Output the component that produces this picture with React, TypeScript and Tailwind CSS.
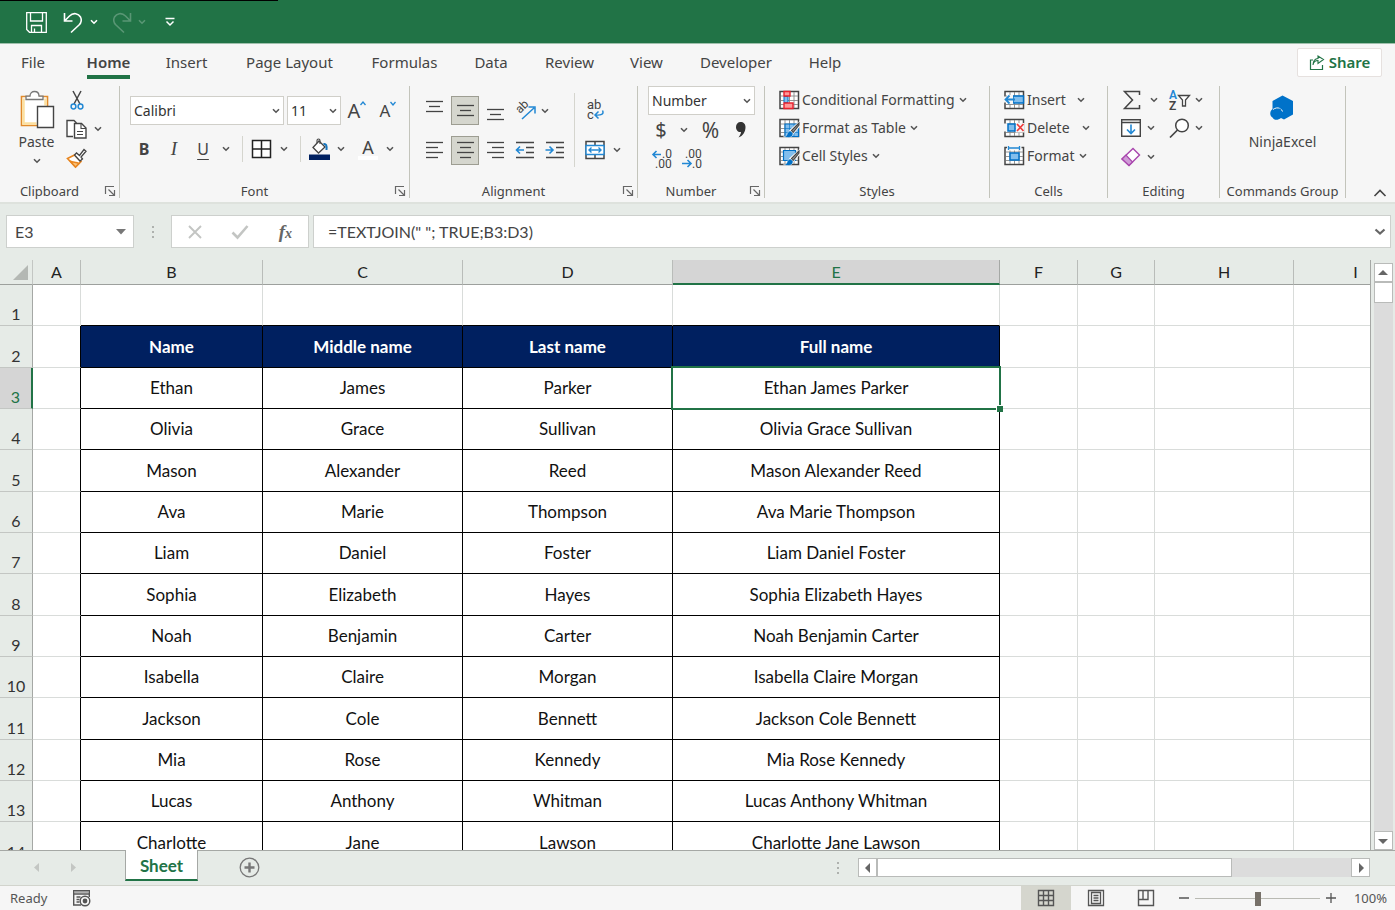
import { useState } from 'react';
import type { ReactNode } from 'react';
import clsx from 'clsx';

const people = [
  ['Ethan', 'James', 'Parker'],
  ['Olivia', 'Grace', 'Sullivan'],
  ['Mason', 'Alexander', 'Reed'],
  ['Ava', 'Marie', 'Thompson'],
  ['Liam', 'Daniel', 'Foster'],
  ['Sophia', 'Elizabeth', 'Hayes'],
  ['Noah', 'Benjamin', 'Carter'],
  ['Isabella', 'Claire', 'Morgan'],
  ['Jackson', 'Cole', 'Bennett'],
  ['Mia', 'Rose', 'Kennedy'],
  ['Lucas', 'Anthony', 'Whitman'],
  ['Charlotte', 'Jane', 'Lawson'],
];

const rows: string[][] = [
  ['', '', '', ''],
  ['Name', 'Middle name', 'Last name', 'Full name'],
  ...people.map((p) => [...p, p.join(' ')]),
];

const columns = [
  { name: 'A', width: 'w-[48px]' },
  { name: 'B', width: 'w-[182px]' },
  { name: 'C', width: 'w-[200px]' },
  { name: 'D', width: 'w-[210px]' },
  { name: 'E', width: 'w-[327px]' },
  { name: 'F', width: 'w-[78px]' },
  { name: 'G', width: 'w-[77px]' },
  { name: 'H', width: 'w-[139px]' },
  { name: 'I', width: 'w-[124px]' },
];

const tabs = [
  { name: 'File', width: 'w-[66px]' },
  { name: 'Home', width: 'w-[85px]' },
  { name: 'Insert', width: 'w-[71px]' },
  { name: 'Page Layout', width: 'w-[135px]' },
  { name: 'Formulas', width: 'w-[95px]' },
  { name: 'Data', width: 'w-[78px]' },
  { name: 'Review', width: 'w-[79px]' },
  { name: 'View', width: 'w-[75px]' },
  { name: 'Developer', width: 'w-[104px]' },
  { name: 'Help', width: 'w-[74px]' },
];

function Icon({ w = 20, h = 20, children }: { w?: number; h?: number; children: ReactNode }) {
  return (
    <svg width={w} height={h} viewBox={`0 0 ${w} ${h}`} fill="none" stroke="#444" strokeWidth="1.4" className="shrink-0 overflow-visible font-[Roboto,sans-serif]" aria-hidden="true">
      {children}
    </svg>
  );
}

function Chevron() {
  return (
    <svg width="8" height="6" viewBox="0 0 8 6" fill="none" stroke="#555" strokeWidth="1.6" className="shrink-0" aria-hidden="true">
      <path d="M1 1.2 4 4.2 7 1.2" />
    </svg>
  );
}

function Tool({ label, className, children }: { label: string; className?: string; children: ReactNode }) {
  return (
    <button type="button" aria-label={label} className={clsx('flex shrink-0 items-center justify-center', className)}>
      {children}
    </button>
  );
}

function Launcher({ label }: { label: string }) {
  return (
    <Tool label={label} className="w-5 pl-[2px]">
      <Icon w={12} h={12}>
        <path d="M1.500 9V1.500H10M4.500 4.500 10 10M10.500 5v5.500H5" stroke="#666" strokeWidth="1.200" />
      </Icon>
    </Tool>
  );
}

function Group({ title, width, launcher, children }: { title: string; width: string; launcher?: boolean; children: ReactNode }) {
  return (
    <section aria-label={title} className={clsx('flex h-28 shrink-0 flex-col border-r border-[#c3c4bb]', width)}>
      <div className="flex-1">{children}</div>
      <div className="flex h-[14px] items-center">
        <span className="flex-1 text-center text-[13px] leading-[14px] whitespace-nowrap">{title}</span>
        {launcher && <Launcher label={`${title} settings`} />}
      </div>
    </section>
  );
}

function Combo({ label, options, className }: { label: string; options: string[]; className: string }) {
  return (
    <div className={clsx('relative h-[29px]', className)}>
      <select aria-label={label} className="h-full w-full appearance-none border border-[#d0cfc9] bg-white pl-[3px] text-sm text-[#333]">
        {options.map((o) => (
          <option key={o}>{o}</option>
        ))}
      </select>
      <span className="pointer-events-none absolute top-3 right-1">
        <Chevron />
      </span>
    </div>
  );
}

function AlignLines({ lines }: { lines: number[][] }) {
  return (
    <Icon w={19} h={20}>
      {lines.map(([x1, x2, y]) => (
        <path key={y} d={`M${x1} ${y}.5H${x2}`} strokeWidth="1.3" />
      ))}
    </Icon>
  );
}

function CellGrid() {
  return (
    <>
      <path d="M1 1.500h18.500v17H1z" fill="#fff" strokeWidth="1.500" />
      <path d="M6 2v16M10.500 2v16M15 2v16M2 6h17M2 10.500h17M2 14.500h17" stroke="#888" strokeWidth=".9" />
    </>
  );
}

function Brush() {
  return (
    <>
      <path d="M20.500 4 11 12.500l2.500 3.500 7-8z" fill="#f6f6f6" stroke="#f6f6f6" strokeWidth="1.500" />
      <path d="M20 5 12.500 12.500l1.500 2 6-7.500z" fill="#999" stroke="#444" strokeWidth="1.100" />
      <path d="M12 13c-3 0-3.500 2-4 3.500-.5 1.500-2 2-3.500 2 4 1.800 9.500 1.500 9.500-3z" fill="#0070c6" stroke="#f6f6f6" strokeWidth=".5" />
    </>
  );
}

function Clipboard() {
  return (
    <Group title="Clipboard" width="w-[120px]" launcher>
      <div className="flex pt-1">
        <button type="button" className="flex w-[66px] flex-col items-center pl-[7px]">
          <Icon w={36} h={40}>
            <path d="M2.500 6.500h26v29h-26z" fill="#fff" stroke="#e18a2b" strokeWidth="1.600" />
            <path d="M4.500 8.500v25h13M26.500 8.500v7" stroke="#fce0a0" strokeWidth="2.500" />
            <path d="M7 9.500V6.200h4C11 3 13 1.500 15.500 1.500S20 3 20 6.200h4v3.300z" fill="#fff" stroke="#777" strokeWidth="1.300" />
            <path d="M18.500 16.500h16v21h-16z" fill="#fff" strokeWidth="1.400" />
          </Icon>
          <span className="pt-[2px] text-sm leading-5">Paste</span>
          <span className="pt-[6px]">
            <Chevron />
          </span>
        </button>
        <div className="flex flex-col gap-[9px]">
          <Tool label="Cut" className="w-[21px]">
            <Icon>
              <path d="M6 1 13 14M14 1 7 14" strokeWidth="1.500" />
              <circle cx="6.500" cy="16.500" r="2.400" stroke="#2288d4" strokeWidth="1.500" />
              <circle cx="13.500" cy="16.500" r="2.400" stroke="#2288d4" strokeWidth="1.500" />
            </Icon>
          </Tool>
          <div className="flex items-center gap-[7px]">
            <Tool label="Copy" className="w-[21px]">
              <Icon w={21}>
                <path d="M7 17.500H1V1.500h7l2.500 2.500" fill="#fff" />
                <path d="M8.500 4.500h7l4.500 4.500v10H8.500z" fill="#fff" />
                <path d="M15 4.500v5h5M11 12.500h6M11 15.500h6" strokeWidth="1.100" />
              </Icon>
            </Tool>
            <Tool label="Copy options">
              <Chevron />
            </Tool>
          </div>
          <Tool label="Format Painter" className="w-[21px]">
            <Icon w={21}>
              <path d="M1.500 10.500 8.500 7l6.500 6.500-5.500 5.500z" fill="#fff" stroke="#e8851f" strokeWidth="1.600" />
              <path d="M4 13c3 1.500 6 1 9 2.500l-3.500 3.500z" fill="#f9c27a" stroke="#e8851f" />
              <path d="m8.500 7 2-2 3 2.500 4.500-6 2 1.800-5 5.700 1.500 2-2.500 2z" fill="#fff" strokeWidth="1.300" />
            </Icon>
          </Tool>
        </div>
      </div>
    </Group>
  );
}

function Font() {
  return (
    <Group title="Font" width="w-[290px]" launcher>
      <div className="flex items-center gap-[3px] pt-[10px] pl-[10px]">
        <Combo label="Font name" options={['Calibri', 'Arial']} className="w-[154px]" />
        <Combo label="Font size" options={['11', '12']} className="w-[54px]" />
        <Tool label="Increase font size" className="ml-[2px] w-[22px] text-[20px] leading-6">
          A
          <span className="self-start pt-[2px]">
            <svg width="6" height="5" viewBox="0 0 6 5" fill="none" stroke="#2288d4" strokeWidth="1.300"><path d="m.5 4 2.500-3 2.500 3" /></svg>
          </span>
        </Tool>
        <Tool label="Decrease font size" className="ml-[7px] w-[20px] text-[17px] leading-6">
          A
          <span className="self-start pt-[2px]">
            <svg width="6" height="5" viewBox="0 0 6 5" fill="none" stroke="#2288d4" strokeWidth="1.300"><path d="m.5 1 2.500 3 2.500-3" /></svg>
          </span>
        </Tool>
      </div>
      <div className="mt-[11px] flex h-[26px] items-center pl-[14px]">
        <Tool label="Bold" className="w-5 text-base font-bold">B</Tool>
        <Tool label="Italic" className="ml-[10px] w-5 font-['Liberation_Serif',serif] text-[19px] italic">I</Tool>
        <Tool label="Underline" className="ml-[9px] w-5 text-base underline underline-offset-4">U</Tool>
        <Tool label="Underline options" className="ml-[9px]"><Chevron /></Tool>
        <span className="ml-3 h-[26px] w-px bg-[#d5d5ce]" />
        <Tool label="Borders" className="ml-2">
          <Icon w={21}>
            <path d="M1.500 1.500h18v17h-18zM10.500 1.500v17M1.500 10h18" fill="#fff" stroke="#222" strokeWidth="1.500" />
          </Icon>
        </Tool>
        <Tool label="Border options" className="ml-2"><Chevron /></Tool>
        <span className="ml-3 h-[26px] w-px bg-[#d5d5ce]" />
        <Tool label="Fill colour" className="ml-2">
          <Icon w={21} h={22}>
            <path d="m4 9.500 6-6.500 6 6-6.500 6z" fill="#fff" strokeWidth="1.300" />
            <path d="M8 5V2.500c0-2 3-2 3 0V6" strokeWidth="1.100" />
            <path d="M14.500 6c2.500-.5 3.500 1 3 6" stroke="#1675bd" strokeWidth="2" />
            <path d="M0 16.500h21V22H0z" fill="#002060" stroke="none" />
          </Icon>
        </Tool>
        <Tool label="Fill options" className="ml-[7px]"><Chevron /></Tool>
        <Tool label="Font colour" className="ml-[13px] h-[22px] w-[20px] border-b-4 border-white text-[18px] leading-4">A</Tool>
        <Tool label="Font colour options" className="ml-2"><Chevron /></Tool>
      </div>
    </Group>
  );
}

function Alignment() {
  const on = 'h-[29px] w-[28px] border border-[#9d9d92] bg-[#d5d6ce]';
  return (
    <Group title="Alignment" width="w-[228px]" launcher>
      <div className="flex pl-[10px]">
        <div className="flex flex-col gap-[11px] pt-[10px]">
          <div className="flex h-[29px] items-center">
            <Tool label="Top align" className="w-[29px]">
              <AlignLines lines={[[1, 18, 0], [4, 15, 5], [1, 18, 10]]} />
            </Tool>
            <Tool label="Middle align" className={clsx('ml-[2px]', on)}>
              <AlignLines lines={[[1, 18, 4], [4, 15, 9], [1, 18, 14]]} />
            </Tool>
            <Tool label="Bottom align" className="ml-[2px] w-[29px]">
              <AlignLines lines={[[1, 18, 8], [4, 15, 13], [1, 18, 18]]} />
            </Tool>
            <Tool label="Orientation" className="ml-[5px]">
              <Icon w={22}>
                <text x="0" y="0" transform="translate(5 13) rotate(-45)" fill="#444" stroke="none" fontSize="12">ab</text>
                <path d="m7 18 12-11M13.500 6H20v6.500" stroke="#2288d4" strokeWidth="1.500" />
              </Icon>
            </Tool>
            <Tool label="Orientation options" className="ml-1"><Chevron /></Tool>
          </div>
          <div className="flex h-[29px] items-center">
            <Tool label="Align left" className="w-[29px]">
              <AlignLines lines={[[1, 18, 1], [1, 13, 6], [1, 18, 11], [1, 13, 16]]} />
            </Tool>
            <Tool label="Align centre" className={clsx('ml-[2px]', on)}>
              <AlignLines lines={[[1, 18, 1], [4, 15, 6], [1, 18, 11], [4, 15, 16]]} />
            </Tool>
            <Tool label="Align right" className="ml-[2px] w-[29px]">
              <AlignLines lines={[[1, 18, 1], [6, 18, 6], [1, 18, 11], [6, 18, 16]]} />
            </Tool>
            <Tool label="Decrease indent" className="ml-[5px]">
              <Icon>
                <path d="M1 1.500h18M11 6.500h8M11 11.500h8M1 16.500h18" strokeWidth="1.300" />
                <path d="M9 9H2M5 5.500 1.500 9 5 12.500" stroke="#2288d4" strokeWidth="1.600" />
              </Icon>
            </Tool>
            <Tool label="Increase indent" className="ml-[10px]">
              <Icon>
                <path d="M1 1.500h18M11 6.500h8M11 11.500h8M1 16.500h18" strokeWidth="1.300" />
                <path d="M.5 9h7M4.500 5.500 8 9l-3.500 3.500" stroke="#2288d4" strokeWidth="1.600" />
              </Icon>
            </Tool>
          </div>
        </div>
        <span className="mt-[7px] ml-[9px] h-[74px] w-px bg-[#d5d5ce]" />
        <div className="flex flex-col gap-5 pt-[14px] pl-[10px]">
          <Tool label="Wrap text" className="w-[21px]">
            <Icon w={21}>
              <text x="2" y="9" fill="#444" stroke="none" fontSize="13">ab</text>
              <text x="2" y="19" fill="#444" stroke="none" fontSize="13">c</text>
              <path d="M17.500 10.500c2 4-2 5-7 4.500M13.500 11.500 10 15l3.500 3.500" stroke="#2288d4" strokeWidth="1.500" />
            </Icon>
          </Tool>
          <div className="flex items-center gap-2">
            <Tool label="Merge and centre">
              <Icon>
                <path d="M1 1.500h18v17H1zM10 1.500V5M10 15v3.500" fill="#fff" strokeWidth="1.500" />
                <path d="M1 5.500h18v9H1z" fill="#fff" stroke="#2288d4" strokeWidth="1.400" />
                <path d="M4 10h12M6.500 7.500 4 10l2.500 2.500M13.500 7.500 16 10l-2.500 2.500" stroke="#2288d4" strokeWidth="1.400" />
              </Icon>
            </Tool>
            <Tool label="Merge options"><Chevron /></Tool>
          </div>
        </div>
      </div>
    </Group>
  );
}

function NumberFormat() {
  return (
    <Group title="Number" width="w-[127px]" launcher>
      <div className="pl-[10px]">
        <Combo label="Number format" options={['Number', 'General']} className="w-[107px]" />
        <div className="flex h-[30px] items-center">
          <Tool label="Currency" className="w-[26px] text-[20px] leading-6">$</Tool>
          <Tool label="Currency options" className="ml-[6px]"><Chevron /></Tool>
          <Tool label="Percent" className="ml-3 w-[21px] text-[21px] leading-6">%</Tool>
          <Tool label="Comma style" className="ml-[14px]">
            <Icon w={12} h={18}>
              <path d="M5.500 1c3 0 5 2 5 5 0 5-2.500 9-7 10.500C5 14.500 6 12.500 6 11 3 11.500 1 9 1 6s2-5 4.500-5z" fill="#333" stroke="none" />
            </Icon>
          </Tool>
        </div>
        <div className="flex gap-[8px] pt-[3px] pl-1">
          <Tool label="Increase decimal">
            <Icon w={22} h={21}>
              <text x="10" y="10" fill="#444" stroke="none" fontSize="12">.0</text>
              <text x="3" y="20" fill="#444" stroke="none" fontSize="12">.00</text>
              <path d="M9 6.500H1M4.500 3 1 6.500 4.500 10" stroke="#2288d4" strokeWidth="1.600" />
            </Icon>
          </Tool>
          <Tool label="Decrease decimal">
            <Icon w={22} h={21}>
              <text x="3" y="10" fill="#444" stroke="none" fontSize="12">.00</text>
              <text x="10" y="20" fill="#444" stroke="none" fontSize="12">.0</text>
              <path d="M0 15.500h9M5.500 12 9 15.500 5.500 19" stroke="#2288d4" strokeWidth="1.600" />
            </Icon>
          </Tool>
        </div>
      </div>
    </Group>
  );
}

function MenuButton({ label, labelWidth, children }: { label: string; labelWidth?: string; children: ReactNode }) {
  return (
    <button type="button" className="flex h-[28px] items-center text-sm whitespace-nowrap">
      <Icon>{children}</Icon>
      <span className={clsx('ml-[3px] text-left', labelWidth)}>{label}</span>
      <span className="ml-1">
        <Chevron />
      </span>
    </button>
  );
}

function Styles() {
  return (
    <Group title="Styles" width="w-[225px]">
      <div className="flex flex-col items-start pl-[14px]">
        <MenuButton label="Conditional Formatting">
          <CellGrid />
          <path d="M5 6.500h4v6H5z" fill="#83beec" stroke="#0070c6" strokeWidth="1" />
          <path d="M5 1.500h6V6H5zM5 13h9v5.500H5z" fill="#f99" stroke="#e8222e" strokeWidth="1.400" />
        </MenuButton>
        <MenuButton label="Format as Table">
          <CellGrid />
          <path d="M6 6h13.500v12.500H6z" fill="#83beec" stroke="#0070c6" strokeWidth="1.200" />
          <path d="M10.500 6v12M15 6v12M6 10.500h13M6 14.500h13" stroke="#0070c6" strokeWidth=".6" />
          <Brush />
        </MenuButton>
        <MenuButton label="Cell Styles">
          <CellGrid />
          <path d="M4.500 4.500h12v10h-12z" fill="#83beec" stroke="#0070c6" strokeWidth="1.200" />
          <Brush />
        </MenuButton>
      </div>
    </Group>
  );
}

function Cells() {
  return (
    <Group title="Cells" width="w-[118px]">
      <div className="flex flex-col items-start pl-[14px]">
        <MenuButton label="Insert" labelWidth="w-[46px]">
          <CellGrid />
          <path d="M9 6h10.500v7H9z" fill="#83beec" stroke="#0070c6" strokeWidth="1.400" />
          <path d="M0 6.500h2v6H0zM3 5h6v9H3z" fill="#f6f6f6" stroke="none" />
          <path d="M11 9.500H1.500M5.500 5.500l-4 4 4 4" stroke="#2288d4" strokeWidth="1.800" />
        </MenuButton>
        <MenuButton label="Delete" labelWidth="w-[51px]">
          <CellGrid />
          <path d="M0 5.500h4v8H0zM11.500 5h9v9.500h-9z" fill="#f6f6f6" stroke="none" />
          <path d="M4 6h7v7H4z" fill="#83beec" stroke="#0070c6" strokeWidth="1.500" />
          <path d="m13 6 6.500 7M19.500 6 13 13" stroke="#ee3a3a" strokeWidth="1.700" />
        </MenuButton>
        <MenuButton label="Format">
          <CellGrid />
          <path d="M3 0h14.500v4.500H3z" fill="#f6f6f6" stroke="none" />
          <path d="M4.500 0v4M15.500 0v4M4.500 2h11" stroke="#2288d4" strokeWidth="1.300" />
          <path d="M6 7h9v7H6z" fill="#83beec" stroke="#0070c6" strokeWidth="1.500" />
        </MenuButton>
      </div>
    </Group>
  );
}

function Editing() {
  return (
    <Group title="Editing" width="w-[112px]">
      <div className="grid grid-cols-[48px_1fr] pl-[13px]">
        <div className="flex h-[27px] items-center gap-[7px]">
          <Tool label="AutoSum"><Icon w={22}><path d="M18.500 5V1.500H3.500l8 8.500-8 8.500h15V15" strokeWidth="1.500" /></Icon></Tool>
          <Tool label="AutoSum options"><Chevron /></Tool>
        </div>
        <div className="flex h-[27px] items-center gap-1">
          <Tool label="Sort and filter">
            <Icon w={22} h={22}>
              <text x="0" y="10" fill="#2288d4" stroke="none" fontSize="12" fontWeight="600">A</text>
              <text x="0" y="21" fill="#444" stroke="none" fontSize="12" fontWeight="600">Z</text>
              <path d="M9.500 6.500h11l-4 4.500v6h-3v-6z" fill="#fff" strokeWidth="1.300" />
            </Icon>
          </Tool>
          <Tool label="Sort options"><Chevron /></Tool>
        </div>
        <div className="flex h-[29px] items-center gap-[6px]">
          <Tool label="Fill"><Icon w={20}><path d="M.7 1.700h18.600v16.500H.7zM1 4.500h18" fill="#fff" strokeWidth="1.400" /><path d="M10 6.500V15M6 11.500l4 4 4-4" stroke="#2288d4" strokeWidth="1.600" /></Icon></Tool>
          <Tool label="Fill options"><Chevron /></Tool>
        </div>
        <div className="flex h-[29px] items-center gap-[5px]">
          <Tool label="Find"><Icon w={21}><circle cx="13" cy="7.500" r="6.300" fill="#fff" strokeWidth="1.500" /><path d="M8.500 12 1 19.500" strokeWidth="1.700" /></Icon></Tool>
          <Tool label="Find options"><Chevron /></Tool>
        </div>
        <div className="flex h-[29px] items-center gap-[6px]">
          <Tool label="Clear">
            <Icon w={20}>
              <path d="m1 12 11-10.500 6.500 6.500L8 18.500z" fill="#fff" stroke="#a845ad" strokeWidth="1.400" />
              <path d="m1 12 4-4 6.500 7L8 18.500z" fill="#cf9bd6" stroke="#a845ad" strokeWidth="1.200" />
            </Icon>
          </Tool>
          <Tool label="Clear options"><Chevron /></Tool>
        </div>
      </div>
    </Group>
  );
}

function Ribbon() {
  const [active, setActive] = useState('Home');
  return (
    <div className="border-b-2 border-[#dee2dd] bg-[#f6f6f6] text-[#444]">
      <div className="flex h-[42px] items-start justify-between pr-[13px]">
        <nav className="flex">
          {tabs.map((t) => (
            <button key={t.name} type="button" onClick={() => setActive(t.name)} className={clsx('flex justify-center pt-[5px] whitespace-nowrap', t.width)}>
              <span className={clsx('h-[30px] border-b-4 text-[15px] leading-[26px]', active === t.name ? 'border-[#217346] font-semibold' : 'border-transparent')}>{t.name}</span>
            </button>
          ))}
        </nav>
        <button type="button" className="mt-1 flex h-[29px] w-[85px] items-center justify-center gap-1 rounded-[2px] border border-[#e6e1df] bg-white text-[15px] font-semibold text-[#217346]">
          <Icon w={16} h={16}>
            <path d="M4 5H1.500v9.500h12V10" stroke="#217346" strokeWidth="1.200" />
            <path d="M4 10c.5-3 2-4.500 5-4.500V8.500L14.500 4.500 9 1v2.500C6 3.500 4 6 4 10z" stroke="#217346" strokeWidth="1.100" />
          </Icon>
          Share
        </button>
      </div>
      <div className="flex h-[116px]">
        <Clipboard />
        <Font />
        <Alignment />
        <NumberFormat />
        <Styles />
        <Cells />
        <Editing />
        <Group title="Commands Group" width="w-[126px]">
          <button type="button" className="mx-auto flex flex-col items-center pt-[9px] text-sm leading-5">
            <Icon w={26} h={26}>
              <path d="M13.500.5 24 6v13.500l-9 5-3-1.500c-3 2.500-7 2.500-8.500-.5C.5 21 .5 16 3.500 14V6z" fill="#0072c9" stroke="none" />
              <path d="M4 14.500c4-3 8.500-1.500 9.500 2" stroke="#f6f6f6" strokeWidth="1" strokeDasharray="7 1" />
            </Icon>
            <span className="pt-[11px]">NinjaExcel</span>
          </button>
        </Group>
        <div className="flex flex-1 items-end justify-end pr-2 pb-1">
          <Tool label="Collapse ribbon">
            <Icon w={14} h={10}><path d="m1.500 8 5.500-5.500L12.500 8" strokeWidth="1.600" /></Icon>
          </Tool>
        </div>
      </div>
    </div>
  );
}

function Dots() {
  return (
    <svg width="4" height="14" viewBox="0 0 4 14" fill="#aeb1ae" aria-hidden="true">
      <path d="M1 1h2v2H1zM1 6h2v2H1zM1 11h2v2H1z" />
    </svg>
  );
}

function FormulaBar() {
  const box = 'h-[33px] border border-[#cdd0cd] bg-white';
  return (
    <div className="flex h-[56px] items-start bg-[#e6ebe7] pt-[11px] pr-1 pl-[6px] text-[#444]">
      <div className={clsx('flex w-32 items-center pr-[7px] pl-2', box)}>
        <input aria-label="Name box" defaultValue="E3" className="min-w-0 flex-1 font-[Lato,sans-serif] text-base outline-none" />
        <svg width="10" height="6" viewBox="0 0 10 6" fill="#777" aria-hidden="true"><path d="M0 0h10L5 5.500z" /></svg>
      </div>
      <div className="flex h-[33px] w-[37px] items-center justify-center">
        <Dots />
      </div>
      <div className={clsx('flex w-[138px] items-center justify-between pr-4 pl-4', box)}>
        <Tool label="Cancel"><Icon w={14} h={14}><path d="m1 1 12 12M13 1 1 13" stroke="#c3c5c3" strokeWidth="1.900" /></Icon></Tool>
        <Tool label="Enter"><Icon w={18} h={14}><path d="m1.500 7.500 5 5L16.500 1" stroke="#c3c5c3" strokeWidth="2.600" /></Icon></Tool>
        <Tool label="Insert function" className="font-['Liberation_Serif',serif] text-[19px] leading-5 font-bold text-[#666] italic">
          f<span className="pt-1 text-[14px]">x</span>
        </Tool>
      </div>
      <div className={clsx('ml-1 flex flex-1 items-center pr-1 pl-[14px]', box)}>
        <input aria-label="Formula" defaultValue={'=TEXTJOIN(" "; TRUE;B3:D3)'} className="min-w-0 flex-1 font-[Lato,sans-serif] text-base outline-none" />
        <Tool label="Expand formula bar"><Icon w={12} h={8}><path d="m1.500 1.500 4.500 4 4.500-4" stroke="#666" strokeWidth="2.200" /></Icon></Tool>
      </div>
    </div>
  );
}

function cellStyle(row: number, col: number) {
  const inTable = col >= 1 && col <= 4;
  const right = row >= 1 && col <= 4 ? 'border-r-black' : 'border-r-[#d9dcda]';
  const bottom = inTable ? 'border-b-black' : 'border-b-[#d9dcda]';
  return clsx('relative border-r border-b p-0', right, bottom, row === 1 && inTable ? 'bg-[#002060] font-bold text-white' : 'bg-white text-[#111]');
}

function Sheet() {
  return (
    <div className="min-w-0 flex-1 overflow-hidden border-r border-[#a5a8a5]">
      <table className="w-[1418px] table-fixed border-separate border-spacing-0 text-center font-[Lato,sans-serif]">
        <colgroup>
          <col className="w-[33px]" />
          {columns.map((c) => (
            <col key={c.name} className={c.width} />
          ))}
        </colgroup>
        <thead>
          <tr className="h-[25px] text-base leading-5">
            <th aria-label="Select all" className="border-r border-b border-r-[#c3c6c3] border-b-[#9da09d] bg-[#e6ebe7] p-0 pr-1">
              <svg width="15" height="15" viewBox="0 0 15 15" fill="#b4b8b4" className="ml-auto" aria-hidden="true"><path d="M15 0v15H0z" /></svg>
            </th>
            {columns.map((c) => (
              <th
                key={c.name}
                scope="col"
                className={clsx('border-r p-0 font-normal', c.name === 'E' ? 'border-r-[#a5a8a5] border-b-2 border-b-[#217346] bg-[#d5d5d5] text-[#217346]' : 'border-r-[#b9bcb9] border-b border-b-[#9da09d] bg-[#e6ebe7] text-[#222]')}
              >
                {c.name}
              </th>
            ))}
          </tr>
        </thead>
        <tbody>
          {rows.map((cells, r) => (
            <tr key={r} className={r % 3 === 1 ? 'h-[42px]' : 'h-[41px]'}>
              <th
                scope="row"
                className={clsx('border-b border-b-[#c3c6c3] p-0 align-bottom text-base leading-[22px] font-normal', r === 2 ? 'border-r-2 border-r-[#217346] bg-[#d5d5d5] text-[#217346]' : 'border-r border-r-[#a5a8a5] bg-[#e6ebe7] text-[#333]')}
              >
                {r + 1}
              </th>
              {columns.map((c, i) => (
                <td key={c.name} className={cellStyle(r, i)}>
                  <span className="text-[17px]">{cells[i - 1]}</span>
                  {r === 2 && c.name === 'E' && (
                    <span className="pointer-events-none absolute -top-[2px] -right-[2px] -bottom-[2px] -left-[2px] z-10 border-2 border-[#217346]">
                      <span className="absolute -right-1 -bottom-1 size-[7px] border-t border-l border-white bg-[#217346]" />
                    </span>
                  )}
                </td>
              ))}
            </tr>
          ))}
        </tbody>
      </table>
    </div>
  );
}

function ScrollArrow({ label, d, className }: { label: string; d: string; className?: string }) {
  return (
    <Tool label={label} className={clsx('size-[19px] border border-[#b9bbb9] bg-white', className)}>
      <svg width="10" height="10" viewBox="0 0 10 10" fill="#666" aria-hidden="true"><path d={d} /></svg>
    </Tool>
  );
}

function SheetTabs() {
  return (
    <div className="flex h-[35px] items-start border-t border-[#a5a8a5] bg-[#e6ebe7]">
      <div className="flex h-8 w-[125px] items-center gap-[30px] pl-[33px]">
        <Tool label="Previous sheet"><svg width="7" height="9" viewBox="0 0 7 9" fill="#c3c6c3"><path d="M6 0v9L1 4.500z" /></svg></Tool>
        <Tool label="Next sheet"><svg width="7" height="9" viewBox="0 0 7 9" fill="#c3c6c3"><path d="M1 0v9l5-4.500z" /></svg></Tool>
      </div>
      <button type="button" className="-mt-px h-[31px] w-[73px] border-x border-b-2 border-x-[#a5a8a5] border-b-[#217346] bg-white pt-[2px] font-[Lato,sans-serif] text-[17px] font-bold text-[#217346]">
        Sheet
      </button>
      <Tool label="New sheet" className="ml-[41px] h-8">
        <Icon w={21} h={21}>
          <circle cx="10.500" cy="10.500" r="9.300" stroke="#777" strokeWidth="1.300" />
          <path d="M10.500 5.500v10M5.500 10.500h10" stroke="#777" strokeWidth="2.400" />
        </Icon>
      </Tool>
      <div className="flex-1" />
      <div className="mt-[7px] flex h-[19px] items-center pr-[25px]">
        <Dots />
        <ScrollArrow label="Scroll left" className="ml-[18px]" d="M7 0v10L2 5z" />
        <div className="flex h-full w-[474px] bg-[#dcdcdc]">
          <div className="w-[355px] border border-[#b9bbb9] bg-white" />
        </div>
        <ScrollArrow label="Scroll right" d="M3 0v10l5-5z" />
      </div>
    </div>
  );
}

function StatusBar() {
  return (
    <footer className="flex h-[25px] items-center border-t border-[#d2d4cd] bg-[#f6f6f6] text-[13px] text-[#555]">
      <span className="w-[72px] pt-[2px] pl-[10px]">Ready</span>
      <Tool label="Record macro">
        <Icon w={20} h={18}>
          <path d="M9 16H1.700V1.700h15.600V8M2 5h15.500M4.500 8h4M4.500 10.500h3M4.500 13h3" stroke="#555" />
          <path d="M2 3h15" stroke="#999" strokeWidth="1.500" />
          <circle cx="13" cy="12" r="4.800" fill="#f6f6f6" stroke="#555" />
          <circle cx="13" cy="12" r="1.700" fill="#555" stroke="#555" />
        </Icon>
      </Tool>
      <div className="flex-1" />
      <Tool label="Normal view" className="h-full w-[50px] bg-[#d5d6ce]">
        <Icon w={18} h={18}><path d="M1.500 1.500h15v15h-15zM6.500 1.500v15M11.500 1.500v15M1.500 6.500h15M1.500 11.500h15" stroke="#555" /></Icon>
      </Tool>
      <Tool label="Page layout view" className="h-full w-[50px]">
        <Icon w={18} h={18}><path d="M1.500 1.500h15v15h-15zM4.500 3.500h9v11h-9zM6.500 6.500h5M6.500 9h5M6.500 11.500h5" stroke="#555" strokeWidth="1.300" /></Icon>
      </Tool>
      <Tool label="Page break view" className="h-full w-[50px]">
        <Icon w={18} h={18}><path d="M1.500 1.500h15v15h-15zM1.500 10.500h9.500v-9M6 1.500v9" stroke="#555" strokeWidth="1.400" /></Icon>
      </Tool>
      <Tool label="Zoom out" className="ml-[7px]"><Icon w={12} h={12}><path d="M1 6h10" stroke="#555" strokeWidth="1.500" /></Icon></Tool>
      <input
        type="range"
        aria-label="Zoom"
        defaultValue={50}
        className="mx-[5px] h-4 w-[125px] appearance-none bg-transparent [&::-webkit-slider-runnable-track]:h-px [&::-webkit-slider-runnable-track]:bg-[#b9bab3] [&::-webkit-slider-thumb]:-mt-[6px] [&::-webkit-slider-thumb]:h-[14px] [&::-webkit-slider-thumb]:w-[6px] [&::-webkit-slider-thumb]:appearance-none [&::-webkit-slider-thumb]:bg-[#777169]"
      />
      <Tool label="Zoom in"><Icon w={12} h={12}><path d="M1 6h10M6 1v10" stroke="#555" strokeWidth="1.300" /></Icon></Tool>
      <span className="w-[58px] pt-[2px] pr-2 text-right">100%</span>
    </footer>
  );
}

function TitleBar() {
  return (
    <header className="relative flex h-11 items-center border-b border-[#9fc0ac] bg-[#217346] pl-[26px] text-white">
      <span className="absolute top-0 left-0 h-px w-[278px] bg-black" />
      <Tool label="Save" className="pt-[2px]">
        <Icon w={21} h={21}><path d="M.7.700h19.600v19.600H3.500L.7 17.500zM4.500 1v8h12V1M5.500 20v-6.500h10V20M8.500 20v-3.500" stroke="#fff" strokeWidth="1.300" /></Icon>
      </Tool>
      <Tool label="Undo" className="ml-4 pt-[2px]">
        <Icon w={20} h={21}><path d="M1.500 1v8h8M1.500 9 6.500 4c4-4 9-2.500 11 1 1.500 3 .5 6-1.500 8L8 20.500" stroke="#fff" strokeWidth="1.600" /></Icon>
      </Tool>
      <Tool label="Undo options" className="ml-[7px]">
        <Icon w={8} h={6}><path d="M1 1.200 4 4.200 7 1.200" stroke="#fff" strokeWidth="1.600" /></Icon>
      </Tool>
      <Tool label="Redo" className="ml-[14px] pt-[2px] opacity-25">
        <Icon w={20} h={21}><path d="M18.500 1v8h-8M18.500 9 13.500 4c-4-4-9-2.500-11 1-1.500 3-.5 6 1.500 8l8 7.500" stroke="#fff" strokeWidth="1.600" /></Icon>
      </Tool>
      <Tool label="Redo options" className="ml-[6px] opacity-25">
        <Icon w={8} h={6}><path d="M1 1.200 4 4.200 7 1.200" stroke="#fff" strokeWidth="1.600" /></Icon>
      </Tool>
      <Tool label="Customize toolbar" className="ml-[19px]">
        <Icon w={10} h={10}><path d="M.5 1.500h9M1.500 4.500 5 8l3.500-3.500" stroke="#fff" strokeWidth="1.500" /></Icon>
      </Tool>
    </header>
  );
}

export default function App() {
  return (
    <div className="flex h-screen flex-col overflow-hidden bg-[#e6ebe7] font-['Noto_Sans',sans-serif]">
      <TitleBar />
      <Ribbon />
      <FormulaBar />
      <main className="flex min-h-0 flex-1">
        <Sheet />
        <div className="flex w-6 flex-col items-center pt-[3px]">
          <ScrollArrow label="Scroll up" d="M0 7h10L5 2z" />
          <div className="w-[19px] flex-1 bg-[#dcdcdc]">
            <div className="h-[21px] border border-[#b9bbb9] bg-white" />
          </div>
          <ScrollArrow label="Scroll down" d="M0 3h10L5 8z" />
        </div>
      </main>
      <SheetTabs />
      <StatusBar />
    </div>
  );
}
